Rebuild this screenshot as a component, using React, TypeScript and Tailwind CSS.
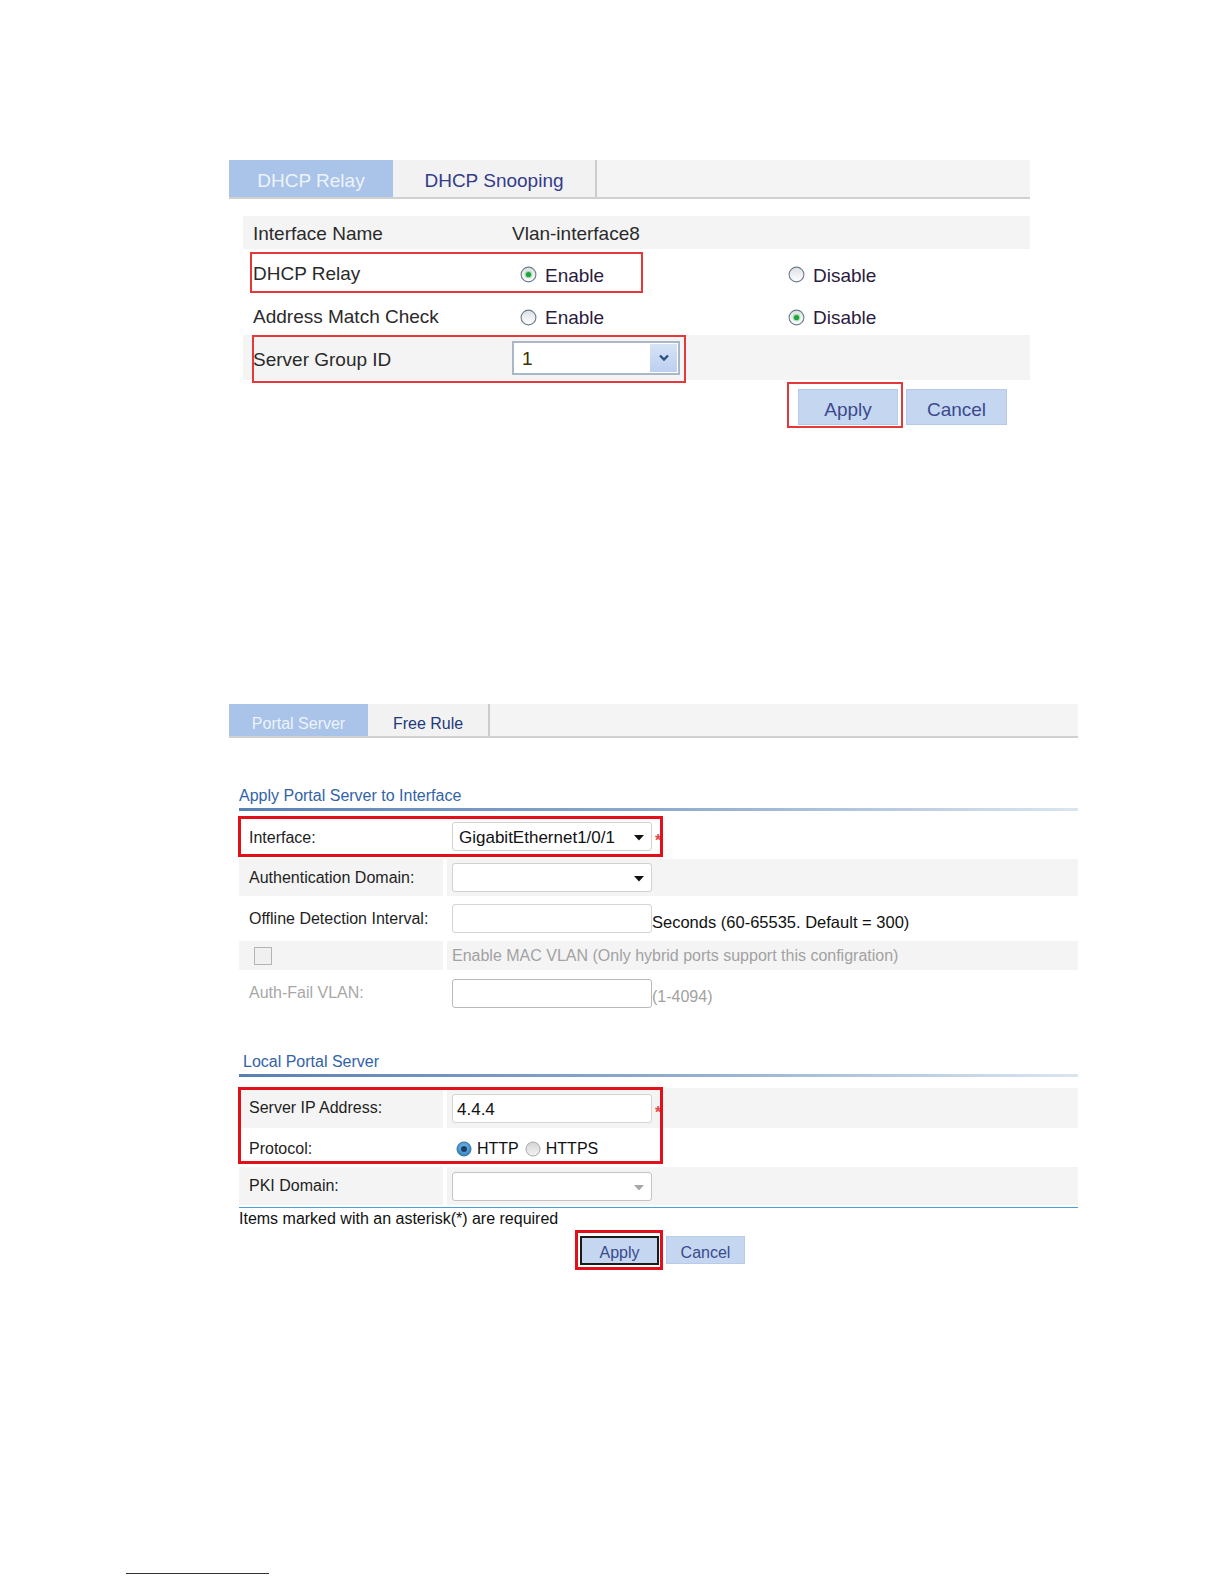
import React from "react";

function Radio1({ checked }: { checked?: boolean }) {
  return (
    <svg width="17" height="17" viewBox="0 0 17 17" className="shrink-0">
      <defs>
        <linearGradient id="r1g" x1="0" y1="0" x2="0" y2="1">
          <stop offset="0" stopColor="#dcdfe3" />
          <stop offset="1" stopColor="#ffffff" />
        </linearGradient>
      </defs>
      <circle cx="8.5" cy="8.5" r="7.4" fill="url(#r1g)" stroke="#6d7d90" strokeWidth="1.1" />
      {checked && (
        <>
          <circle cx="8.5" cy="8.5" r="3.8" fill="#a6e0ae" />
          <circle cx="8.5" cy="8.5" r="2.6" fill="#22a13c" />
        </>
      )}
    </svg>
  );
}

function Radio2({ checked }: { checked?: boolean }) {
  return (
    <svg width="16" height="16" viewBox="0 0 16 16" className="shrink-0">
      <defs>
        <radialGradient id="r2b" cx="0.5" cy="0.4" r="0.6">
          <stop offset="0" stopColor="#7fc4f0" />
          <stop offset="1" stopColor="#2a7fc0" />
        </radialGradient>
        <linearGradient id="r2g" x1="0" y1="0" x2="0" y2="1">
          <stop offset="0" stopColor="#d4d4d4" />
          <stop offset="1" stopColor="#f4f4f4" />
        </linearGradient>
      </defs>
      {checked ? (
        <>
          <circle cx="8" cy="8" r="7" fill="url(#r2b)" stroke="#3d6f99" strokeWidth="1" />
          <circle cx="8" cy="8" r="3" fill="#1d3f63" />
        </>
      ) : (
        <circle cx="8" cy="8" r="7" fill="url(#r2g)" stroke="#a8a8a8" strokeWidth="1" />
      )}
    </svg>
  );
}

function Tri({ color = "#111" }: { color?: string }) {
  return (
    <svg width="10" height="6" viewBox="0 0 10 6" className="mt-[3px] shrink-0">
      <polygon points="0,0 10,0 5,5.5" fill={color} />
    </svg>
  );
}

function Select2({ value, disabled }: { value?: string; disabled?: boolean }) {
  return (
    <div
      className={
        "flex h-[29px] w-[200px] items-center justify-between rounded-[3px] border bg-white pl-[6px] pr-[7px] " +
        (disabled ? "border-[#c4c4c4]" : "border-[#d2d2d2]")
      }
    >
      <span className="pt-[4px] text-[17px] text-[#111]">{value ?? ""}</span>
      <Tri color={disabled ? "#a8a8a8" : "#111"} />
    </div>
  );
}

function Input2({ value, dim }: { value?: string; dim?: boolean }) {
  return (
    <div
      className={
        "flex h-[29px] w-[200px] items-center rounded-[3px] border bg-white pl-[4px] " +
        (dim ? "border-[#b9b9b9]" : "border-[#d4d4d4]")
      }
    >
      <span className="pt-[3px] text-[17px] text-[#111]">{value ?? ""}</span>
    </div>
  );
}

function Star() {
  return <span className="ml-[3px] mt-[9px] text-[16px] font-bold leading-none text-[#e5484a]">*</span>;
}

export default function App() {
  return (
    <div className="relative h-[1584px] w-[1224px] overflow-hidden bg-white font-['Liberation_Sans',Arial,sans-serif]">
      {/* Section 1 */}
      <div className="ml-[229px] w-[801px] pt-[160px]">
        <div className="flex h-[39px] border-b-2 border-[#d0d0d0] bg-[#f4f4f4] text-[19px]">
          <div className="flex w-[164px] items-center justify-center bg-[#a9c3e9] pt-[6px] text-[#eef3fb]">DHCP Relay</div>
          <div className="flex w-[204px] items-center justify-center border-r-2 border-[#cccccc] bg-[#f2f2f2] pt-[6px] text-[#343c8a]">
            DHCP Snooping
          </div>
        </div>

        <div className="ml-[14px] mt-[17px] w-[787px] text-[19px] text-[#2a2a2a]">
          <div className="flex h-[33px] items-center bg-[#f4f4f4] pt-[4px]">
            <div className="w-[269px] pl-[10px]">Interface Name</div>
            <div>Vlan-interface8</div>
          </div>

          <div className="relative flex h-[45px] items-center">
            <div className="w-[269px] pl-[10px] pt-[5px]">DHCP Relay</div>
            <div className="flex w-[268px] items-center gap-[8px] pl-[8px] pt-[6px] text-[#2b1b3e]">
              <Radio1 checked />
              <span className="pt-[3px]">Enable</span>
            </div>
            <div className="flex items-center gap-[8px] pl-[8px] pt-[6px] text-[#2b1b3e]">
              <Radio1 />
              <span className="pt-[3px]">Disable</span>
            </div>
            <div className="absolute left-[7px] top-[3px] h-[41px] w-[393px] border-2 border-[#e5383b]" />
          </div>

          <div className="flex h-[41px] items-center pt-[5px]">
            <div className="w-[269px] pl-[10px]">Address Match Check</div>
            <div className="flex w-[268px] items-center gap-[8px] pl-[8px] text-[#2b1b3e]">
              <Radio1 />
              <span className="pt-[3px]">Enable</span>
            </div>
            <div className="flex items-center gap-[8px] pl-[8px] text-[#2b1b3e]">
              <Radio1 checked />
              <span className="pt-[3px]">Disable</span>
            </div>
          </div>

          <div className="relative flex h-[45px] items-center bg-[#f4f4f4]">
            <div className="w-[269px] pl-[10px] pt-[5px]">Server Group ID</div>
            <div className="flex h-[34px] w-[168px] items-center justify-between border-2 border-[#a9b7c8] bg-white pl-[8px] pr-[1px]">
              <span className="pt-[3px] text-[#3a3000]">1</span>
              <div className="flex h-[28px] w-[27px] items-center justify-center bg-[linear-gradient(to_bottom,#d6e3f6,#bccff0)]">
                <svg width="12" height="8" viewBox="0 0 12 8">
                  <path d="M2 1.5 L6 5.5 L10 1.5" fill="none" stroke="#2f4f80" strokeWidth="2.4" />
                </svg>
              </div>
            </div>
            <div className="absolute left-[9px] top-0 h-[48px] w-[434px] border-2 border-[#e5383b]" />
          </div>

          <div className="flex h-[48px] justify-end gap-[8px] pr-[23px] pt-[9px]">
            <div className="relative">
              <div className="flex h-[36px] w-[100px] items-center justify-center border border-[#b6c9e6] bg-[#c5d6f1] pt-[6px] text-[#3b4a8c]">
                Apply
              </div>
              <div className="absolute -left-[11px] -top-[7px] h-[46px] w-[116px] border-2 border-[#e5383b]" />
            </div>
            <div className="flex h-[36px] w-[101px] items-center justify-center border border-[#b6c9e6] bg-[#c5d6f1] pt-[6px] text-[#3b4a8c]">
              Cancel
            </div>
          </div>
        </div>
      </div>

      {/* Section 2 */}
      <div className="ml-[229px] mt-[276px] w-[849px]">
        <div className="flex h-[34px] border-b-2 border-[#d0d0d0] bg-[#f4f4f4] text-[16px]">
          <div className="flex w-[139px] items-center justify-center bg-[#a9c3e9] pt-[7px] text-[#eef3fb]">Portal Server</div>
          <div className="flex w-[122px] items-center justify-center border-r-2 border-[#cccccc] bg-[#f2f2f2] pt-[7px] text-[#1e3a7a]">
            Free Rule
          </div>
        </div>

        <div className="ml-[10px] w-[839px] text-[16px] text-[#1e1e1e]">
          <div className="mt-[48px] h-[20px] leading-[20px] text-[#3263a8]">Apply Portal Server to Interface</div>
          <div className="mt-[2px] h-[3px] bg-[linear-gradient(to_right,#5a80b3,#8eaacd_50%,#dbe5f0)]" />

          <div className="mt-[2px] flex flex-col gap-[2px]">
            <div className="relative flex h-[44px] items-center gap-[4px]">
              <div className="w-[204px] pl-[10px] pt-[5px]">Interface:</div>
              <div className="flex flex-1 items-center pl-[5px] pt-[2px]">
                <Select2 value="GigabitEthernet1/0/1" />
                <Star />
              </div>
              <div className="absolute -left-[1px] top-[3px] h-[41px] w-[425px] border-[3px] border-[#e3101c]" />
            </div>

            <div className="flex h-[37px] gap-[4px]">
              <div className="flex w-[204px] items-center bg-[#f4f4f4] pl-[10px]">Authentication Domain:</div>
              <div className="flex flex-1 items-center bg-[#f4f4f4] pl-[5px]">
                <Select2 />
              </div>
            </div>

            <div className="flex h-[41px] items-center gap-[4px]">
              <div className="w-[204px] pl-[10px]">Offline Detection Interval:</div>
              <div className="flex flex-1 items-center pl-[5px]">
                <Input2 />
                <span className="mt-[8px] text-[16.5px] text-[#111]">Seconds (60-65535. Default = 300)</span>
              </div>
            </div>

            <div className="flex h-[29px] gap-[4px]">
              <div className="flex w-[204px] items-center bg-[#f4f4f4] pl-[15px]">
                <div className="h-[18px] w-[18px] border border-[#b4b4b4] bg-[#f0f0f0]" />
              </div>
              <div className="flex flex-1 items-center bg-[#f4f4f4] pl-[5px] text-[#a2a2a2]">
                Enable MAC VLAN (Only hybrid ports support this configration)
              </div>
            </div>

            <div className="flex h-[42px] items-center gap-[4px]">
              <div className="w-[204px] pl-[10px] text-[#a8a8a8]">Auth-Fail VLAN:</div>
              <div className="flex flex-1 items-center pl-[5px]">
                <Input2 dim />
                <span className="mt-[8px] text-[#a2a2a2]">(1-4094)</span>
              </div>
            </div>
          </div>

          <div className="mt-[38px] h-[20px] pl-[4px] leading-[20px] text-[#3263a8]">Local Portal Server</div>
          <div className="mt-[2px] h-[3px] bg-[linear-gradient(to_right,#5a80b3,#8eaacd_50%,#dbe5f0)]" />

          <div className="relative mt-[11px] flex flex-col gap-[2px]">
            <div className="flex h-[40px] gap-[4px]">
              <div className="flex w-[204px] items-center bg-[#f4f4f4] pl-[10px]">Server IP Address:</div>
              <div className="flex flex-1 items-center bg-[#f4f4f4] pl-[5px]">
                <Input2 value="4.4.4" />
                <Star />
              </div>
            </div>
            <div className="flex h-[35px] items-center gap-[4px] pt-[3px]">
              <div className="w-[204px] pl-[10px]">Protocol:</div>
              <div className="flex flex-1 items-center pl-[9px] text-[#111]">
                <Radio2 checked />
                <span className="ml-[5px]">HTTP</span>
                <span className="ml-[6px]">
                  <Radio2 />
                </span>
                <span className="ml-[5px]">HTTPS</span>
              </div>
            </div>
            <div className="absolute -left-[1px] -top-[1px] h-[77px] w-[425px] border-[3px] border-[#e3101c]" />
            <div className="flex h-[38px] gap-[4px]">
              <div className="flex w-[204px] items-center bg-[#f4f4f4] pl-[10px]">PKI Domain:</div>
              <div className="flex flex-1 items-center bg-[#f4f4f4] pl-[5px]">
                <Select2 disabled />
              </div>
            </div>
          </div>

          <div className="mt-[2px] h-px bg-[#49a2de]" />
          <div className="mt-[2px] h-[18px] leading-[18px] text-[#111]">Items marked with an asterisk(*) are required</div>

          <div className="mt-[8px] flex gap-[7px] pl-[341px]">
            <div className="relative">
              <div className="flex h-[29px] w-[79px] items-center justify-center border-2 border-[#1b1b1b] bg-[#c5d6f1] pt-[5px] text-[#3a4a8c]">
                Apply
              </div>
              <div className="absolute -left-[5px] -top-[6px] h-[40px] w-[88px] border-[3px] border-[#e3101c]" />
            </div>
            <div className="flex h-[28px] w-[79px] items-center justify-center border border-[#b9cbe6] bg-[#c5d6f1] pt-[6px] text-[#3a4a8c]">
              Cancel
            </div>
          </div>
        </div>
      </div>

      <div className="ml-[126px] mt-[308px] h-px w-[143px] bg-[#333]" />
    </div>
  );
}
